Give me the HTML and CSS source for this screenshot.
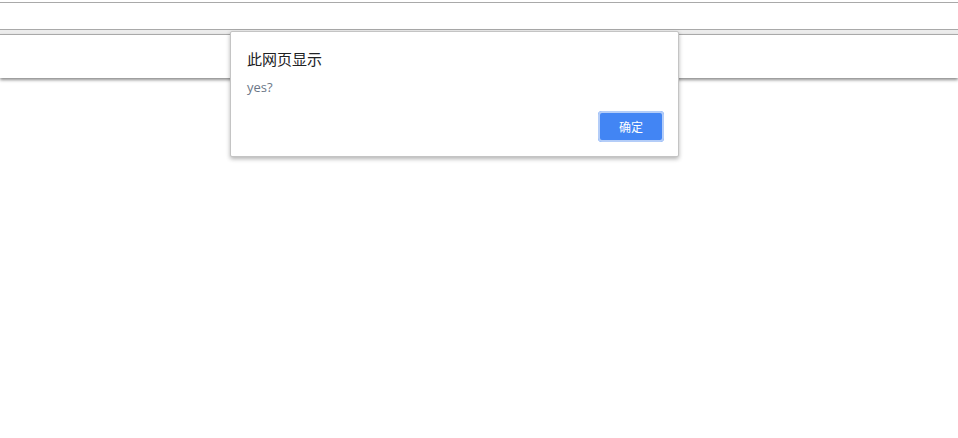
FILE: index.html
```html
<!DOCTYPE html>
<html lang="zh">
<head>
<meta charset="utf-8">
<title>alert</title>
<link rel="stylesheet" href="styles.css">
</head>
<body>
<div class="page">
  <div class="field-top"></div>
  <div class="gap"></div>
  <div class="field-main"></div>
  <div class="dialog" role="alertdialog">
    <div class="dialog-title">此网页显示</div>
    <div class="dialog-msg">yes?</div>
    <div class="dialog-actions">
      <button class="btn-ok">确定</button>
    </div>
  </div>
</div>
</body>
</html>
```
FILE: styles.css
```css
html, body {
  margin: 0;
  padding: 0;
  background: #ffffff;
}
.page {
  position: relative;
  width: 958px;
  height: 438px;
  padding-top: 2px;
  box-sizing: border-box;
  font-family: "Open Sans", "Noto Sans CJK SC", sans-serif;
}
.field-top {
  height: 26px;
  border-top: 1px solid #a9a9a9;
  border-bottom: 1px solid #a9a9a9;
  background: #ffffff;
}
.gap {
  height: 4px;
  background: #ececec;
}
.field-main {
  height: 43px;
  border-top: 1px solid #a9a9a9;
  background: #ffffff;
  box-shadow: 0 2px 3px rgba(0, 0, 0, 0.45);
}
.dialog {
  position: absolute;
  left: 230px;
  top: 31px;
  width: 449px;
  height: 126px;
  box-sizing: border-box;
  background: #ffffff;
  border: 1px solid #c4c4c4;
  border-radius: 2px;
  box-shadow: 0 2px 4px rgba(0, 0, 0, 0.3);
  padding: 17px 14px 14px 16px;
  display: flex;
  flex-direction: column;
}
.dialog-title {
  font-family: "Noto Sans CJK SC", sans-serif;
  font-size: 15px;
  line-height: 20px;
  color: #202124;
}
.dialog-msg {
  margin-top: 9px;
  font-size: 13px;
  line-height: 18px;
  color: #6b7686;
}
.dialog-actions {
  display: flex;
  justify-content: flex-end;
  margin-top: auto;
}
.btn-ok {
  width: 66px;
  height: 31px;
  box-sizing: border-box;
  background: #4285f4;
  color: #ffffff;
  border: none;
  border-radius: 4px;
  box-shadow: 0 0 0 2px #b4cdf8 inset;
  font-family: "Noto Sans CJK SC", sans-serif;
  font-size: 12px;
  padding: 0;
}
```
